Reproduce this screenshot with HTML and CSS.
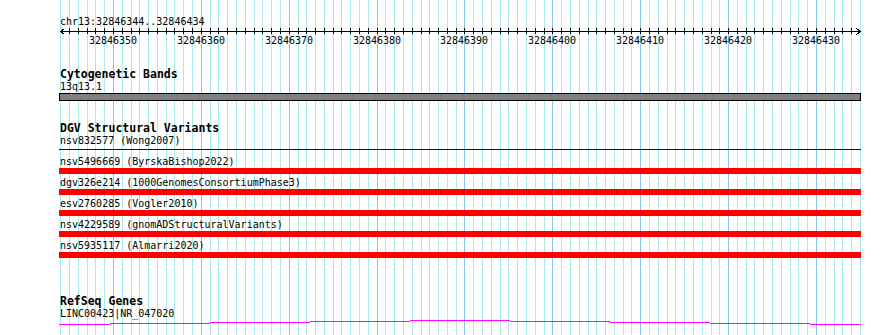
FILE: index.html
```html
<!DOCTYPE html>
<html>
<head>
<meta charset="utf-8">
<link rel="stylesheet" href="styles.css">
</head>
<body>
<div class="view">
  <svg class="grid" width="890" height="335" viewBox="0 0 890 335">
    <path class="grid-minor" d="M60.5 0V335M69.5 0V335M78.5 0V335M87.5 0V335M95.5 0V335M104.5 0V335M122.5 0V335M131.5 0V335M139.5 0V335M148.5 0V335M157.5 0V335M166.5 0V335M174.5 0V335M183.5 0V335M192.5 0V335M210.5 0V335M218.5 0V335M227.5 0V335M236.5 0V335M245.5 0V335M254.5 0V335M262.5 0V335M271.5 0V335M280.5 0V335M298.5 0V335M306.5 0V335M315.5 0V335M324.5 0V335M333.5 0V335M341.5 0V335M350.5 0V335M359.5 0V335M368.5 0V335M385.5 0V335M394.5 0V335M403.5 0V335M412.5 0V335M421.5 0V335M429.5 0V335M438.5 0V335M447.5 0V335M456.5 0V335M473.5 0V335M482.5 0V335M491.5 0V335M500.5 0V335M508.5 0V335M517.5 0V335M526.5 0V335M535.5 0V335M544.5 0V335M561.5 0V335M570.5 0V335M579.5 0V335M588.5 0V335M596.5 0V335M605.5 0V335M614.5 0V335M623.5 0V335M631.5 0V335M649.5 0V335M658.5 0V335M667.5 0V335M675.5 0V335M684.5 0V335M693.5 0V335M702.5 0V335M711.5 0V335M719.5 0V335M737.5 0V335M746.5 0V335M754.5 0V335M763.5 0V335M772.5 0V335M781.5 0V335M790.5 0V335M798.5 0V335M807.5 0V335M825.5 0V335M834.5 0V335M842.5 0V335M851.5 0V335M860.5 0V335"/>
    <path class="grid-major" d="M113.5 0V335M201.5 0V335M289.5 0V335M377.5 0V335M464.5 0V335M552.5 0V335M640.5 0V335M728.5 0V335M816.5 0V335"/>
  </svg>

  <div class="content">
    <div class="locus">chr13:32846344..32846434</div>

    <svg class="ruler" width="890" height="19" viewBox="0 0 890 19">
      <path class="ruler-line" d="M60 3.5H861M64.5 0.5L60.5 3.5L64.5 6.5M856.5 0.5L860.5 3.5L856.5 6.5"/>
      <path class="ruler-ticks" d="M69.5 0v6M78.5 0v6M87.5 0v6M95.5 0v6M104.5 0v6M113.5 0v6M122.5 0v6M131.5 0v6M139.5 0v6M148.5 0v6M157.5 0v6M166.5 0v6M174.5 0v6M183.5 0v6M192.5 0v6M201.5 0v6M210.5 0v6M218.5 0v6M227.5 0v6M236.5 0v6M245.5 0v6M254.5 0v6M262.5 0v6M271.5 0v6M280.5 0v6M289.5 0v6M298.5 0v6M306.5 0v6M315.5 0v6M324.5 0v6M333.5 0v6M341.5 0v6M350.5 0v6M359.5 0v6M368.5 0v6M377.5 0v6M385.5 0v6M394.5 0v6M403.5 0v6M412.5 0v6M421.5 0v6M429.5 0v6M438.5 0v6M447.5 0v6M456.5 0v6M464.5 0v6M473.5 0v6M482.5 0v6M491.5 0v6M500.5 0v6M508.5 0v6M517.5 0v6M526.5 0v6M535.5 0v6M544.5 0v6M552.5 0v6M561.5 0v6M570.5 0v6M579.5 0v6M588.5 0v6M596.5 0v6M605.5 0v6M614.5 0v6M623.5 0v6M631.5 0v6M640.5 0v6M649.5 0v6M658.5 0v6M667.5 0v6M675.5 0v6M684.5 0v6M693.5 0v6M702.5 0v6M711.5 0v6M719.5 0v6M728.5 0v6M737.5 0v6M746.5 0v6M754.5 0v6M763.5 0v6M772.5 0v6M781.5 0v6M790.5 0v6M798.5 0v6M807.5 0v6M816.5 0v6M825.5 0v6M834.5 0v6M842.5 0v6M851.5 0v6"/>
      <g class="ruler-labels">
        <text x="113" y="16">32846350</text>
        <text x="201" y="16">32846360</text>
        <text x="289" y="16">32846370</text>
        <text x="377" y="16">32846380</text>
        <text x="464" y="16">32846390</text>
        <text x="552" y="16">32846400</text>
        <text x="640" y="16">32846410</text>
        <text x="728" y="16">32846420</text>
        <text x="816" y="16">32846430</text>
      </g>
    </svg>

    <section class="track track-cyto">
      <h2 class="track-title">Cytogenetic Bands</h2>
      <div class="feat-label">13q13.1</div>
      <div class="band"></div>
    </section>

    <section class="track track-dgv">
      <h2 class="track-title">DGV Structural Variants</h2>
      <div class="row">
        <div class="feat-label">nsv832577 (Wong2007)</div>
        <div class="feat-line"></div>
      </div>
      <div class="row">
        <div class="feat-label">nsv5496669 (ByrskaBishop2022)</div>
        <div class="feat-bar"></div>
      </div>
      <div class="row">
        <div class="feat-label">dgv326e214 (1000GenomesConsortiumPhase3)</div>
        <div class="feat-bar"></div>
      </div>
      <div class="row">
        <div class="feat-label">esv2760285 (Vogler2010)</div>
        <div class="feat-bar"></div>
      </div>
      <div class="row">
        <div class="feat-label">nsv4229589 (gnomADStructuralVariants)</div>
        <div class="feat-bar"></div>
      </div>
      <div class="row">
        <div class="feat-label">nsv5935117 (Almarri2020)</div>
        <div class="feat-bar"></div>
      </div>
    </section>

    <section class="track track-refseq">
      <h2 class="track-title">RefSeq Genes</h2>
      <div class="feat-label">LINC00423|NR_047020</div>
      <svg class="gene" width="802" height="8" viewBox="0 0 802 8">
        <path class="gene-intron" d="M0 4.5H51M51 3.5H151M151 2.5H251M251 1.5H351M351 0.5H451M451 1.5H551M551 2.5H651M651 3.5H751M751 4.5H802"/>
      </svg>
    </section>
  </div>
</div>
</body>
</html>
```

FILE: styles.css
```css
html, body {
  margin: 0;
  padding: 0;
  background: #ffffff;
}

.view {
  position: relative;
  width: 890px;
  height: 335px;
  overflow: hidden;
  background: #ffffff;
  font-family: "DejaVu Sans Mono", "Liberation Mono", monospace;
  font-size: 10px;
  color: #000000;
}

.grid {
  position: absolute;
  top: 0;
  left: 0;
  shape-rendering: crispEdges;
}

.grid-minor {
  stroke: #aaeaee;
  stroke-width: 1;
  fill: none;
}

.grid-major {
  stroke: #84c6ec;
  stroke-width: 1;
  fill: none;
}

.content {
  position: relative;
  display: flex;
  flex-direction: column;
}

.locus {
  margin-top: 15px;
  padding-left: 60px;
  line-height: 13px;
  white-space: pre;
}

.ruler {
  display: block;
  shape-rendering: crispEdges;
}

.ruler-line,
.ruler-ticks {
  stroke: #000000;
  stroke-width: 1;
  fill: none;
}

.ruler-labels text {
  font-family: "DejaVu Sans Mono", "Liberation Mono", monospace;
  font-size: 10px;
  fill: #000000;
  text-anchor: middle;
}

.track {
  display: flex;
  flex-direction: column;
  padding-left: 59px;
  width: 802px;
}

.track-cyto {
  margin-top: 21px;
}

.track-dgv {
  margin-top: 21px;
}

.track-refseq {
  margin-top: 35px;
}

.track-title {
  margin: 0;
  padding-left: 1px;
  font-size: 11.5px;
  font-weight: bold;
  line-height: 12px;
  white-space: pre;
}

.feat-label {
  padding-left: 1px;
  line-height: 13px;
  white-space: pre;
}

.band {
  box-sizing: border-box;
  height: 8px;
  background: #808080;
  border: 1px solid #000000;
}

.row {
  display: flex;
  flex-direction: column;
  margin-bottom: 2px;
}

.feat-line {
  height: 1px;
  margin: 2px 0 3px;
  background: #0000cc;
}

.feat-bar {
  height: 6px;
  background: #ff0000;
}

.gene {
  display: block;
  shape-rendering: crispEdges;
}

.gene-intron {
  stroke: #ff00ff;
  stroke-width: 1;
  fill: none;
}
```
